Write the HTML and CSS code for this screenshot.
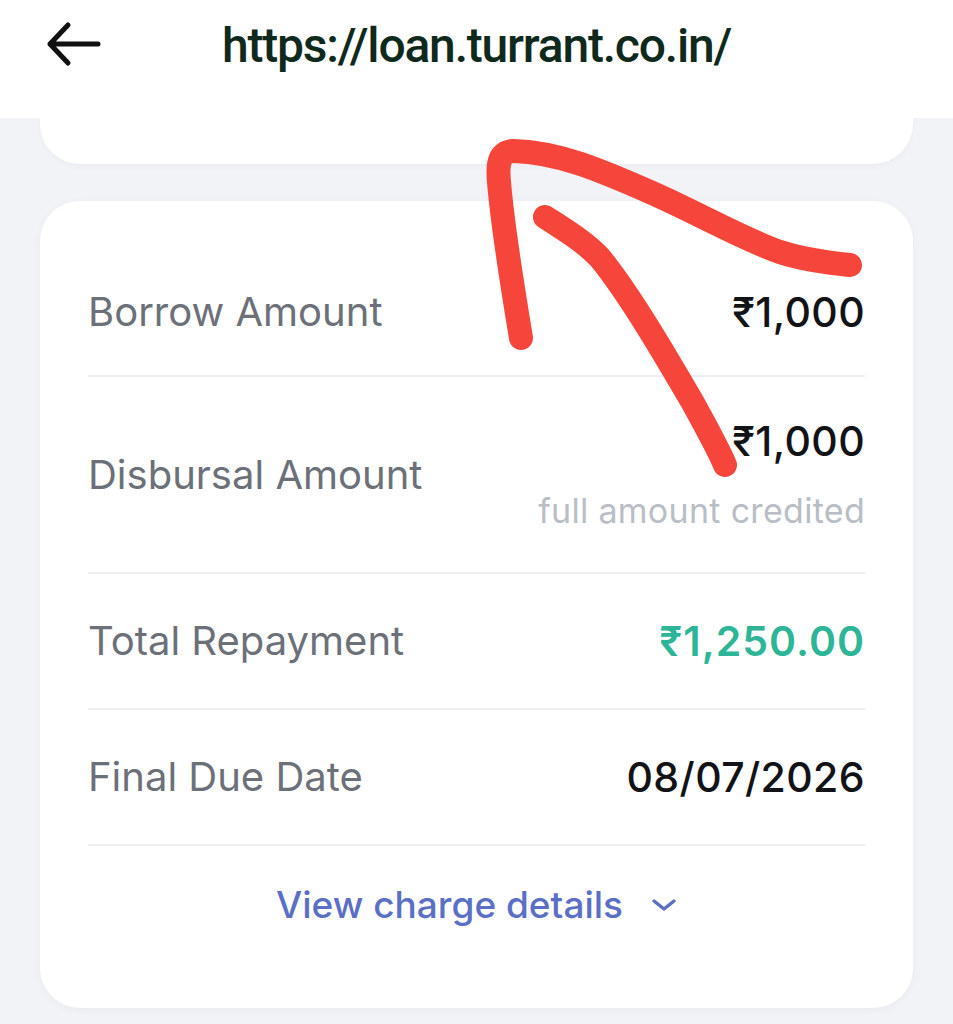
FILE: index.html
```html
<!DOCTYPE html>
<html>
<head>
    <meta charset="UTF-8">
    <title>Loan details</title>
    <link rel="stylesheet" href="styles.css">
</head>
<body>
    <div class="top-bar">
        <svg class="back-icon" width="56" height="48" viewBox="0 0 56 48">
            <path d="M52 23 H4 M22 4 L4 23 L22 42" fill="none" stroke="#111" stroke-width="5" stroke-linecap="round" stroke-linejoin="round"/>
        </svg>
        <div class="url">https://loan.turrant.co.in/</div>
    </div>

    <div class="page">
        <div class="card card-top"></div>

        <div class="card summary">
            <div class="row first">
                <div class="label">Borrow Amount</div>
                <div class="value">₹1,000</div>
            </div>
            <div class="row">
                <div class="label">Disbursal Amount</div>
                <div class="value-group">
                    <div class="value">₹1,000</div>
                    <div class="note">full amount credited</div>
                </div>
            </div>
            <div class="row">
                <div class="label">Total Repayment</div>
                <div class="value total">₹1,250.00</div>
            </div>
            <div class="row">
                <div class="label">Final Due Date</div>
                <div class="value">08/07/2026</div>
            </div>
            <div class="charges">
                <span>View charge details</span>
                <svg width="26" height="18" viewBox="0 0 26 18">
                    <path d="M3 5 L13 13 L23 5" fill="none" stroke="#5b6fc6" stroke-width="3.5" stroke-linecap="round" stroke-linejoin="round"/>
                </svg>
            </div>
        </div>
    </div>

    <!-- пометка от руки поверх скриншота -->
    <svg class="scribble" width="953" height="1024" viewBox="0 0 953 1024">
        <g fill="none" stroke="#f6453a" stroke-width="24" stroke-linecap="round" stroke-linejoin="round">
            <path d="M521 338 C513 290 503 230 499 182 C497 162 500 152 513 151 C558 152 600 170 650 192 C700 214 740 238 780 252 C805 260 830 263 850 265"/>
            <path d="M545 217 C565 230 585 242 600 258 C630 295 665 355 693 403 C705 425 718 448 725 465"/>
        </g>
    </svg>
</body>
</html>
```

FILE: styles.css
```css
body {
    margin: 0;
    background-color: #f2f3f7;
    font-family: Inter, "Noto Sans", sans-serif;
    width: 953px;
    height: 1024px;
    overflow: hidden;
    position: relative;
}
.top-bar {
    height: 118px;
    background-color: white;
    display: flex;
    align-items: center;
    padding-left: 46px;
    box-sizing: border-box;
    padding-bottom: 28px;
}
.back-icon {
    flex-shrink: 0;
}
.url {
    margin-left: 120px;
    font-family: Roboto, sans-serif;
    font-weight: 500;
    font-size: 48px;
    color: #0f2a1d;
    letter-spacing: -1.2px;
}
.page {
    padding: 0 40px;
}
.card {
    background-color: white;
    border-radius: 40px;
}
.card-top {
    height: 46px;
    border-top-left-radius: 0;
    border-top-right-radius: 0;
    box-shadow: 0 2px 6px rgba(20,30,60,0.03);
}
.summary {
    margin-top: 37px;
    padding: 48px 48px 0;
    box-shadow: 0 2px 8px rgba(20,30,60,0.04);
    height: 807px;
    box-sizing: border-box;
}
.row {
    display: flex;
    justify-content: space-between;
    align-items: center;
    border-bottom: 2px solid #eceef1;
    padding: 44px 0;
}
.row.first {
    padding: 40px 0;
}
.label {
    font-size: 40px;
    color: #6c7079;
    line-height: 46px;
}
.value-group {
    display: flex;
    flex-direction: column;
    align-items: flex-end;
    gap: 27px;
    margin: -3px 0;
}
.value {
    font-size: 41px;
    font-weight: 500;
    color: #121317;
    line-height: 46px;
    letter-spacing: 0.4px;
}
.value.total {
    color: #2db597;
    font-weight: 600;
    letter-spacing: 1px;
}
.note {
    font-size: 34px;
    color: #b9bdc6;
    line-height: 40px;
    letter-spacing: 0.3px;
}
.charges {
    display: flex;
    justify-content: center;
    align-items: center;
    gap: 28px;
    padding-top: 36px;
    font-size: 37px;
    font-weight: 500;
    color: #5b6fc6;
    line-height: 46px;
}
.scribble {
    position: absolute;
    left: 0;
    top: 0;
    pointer-events: none;
}
```
